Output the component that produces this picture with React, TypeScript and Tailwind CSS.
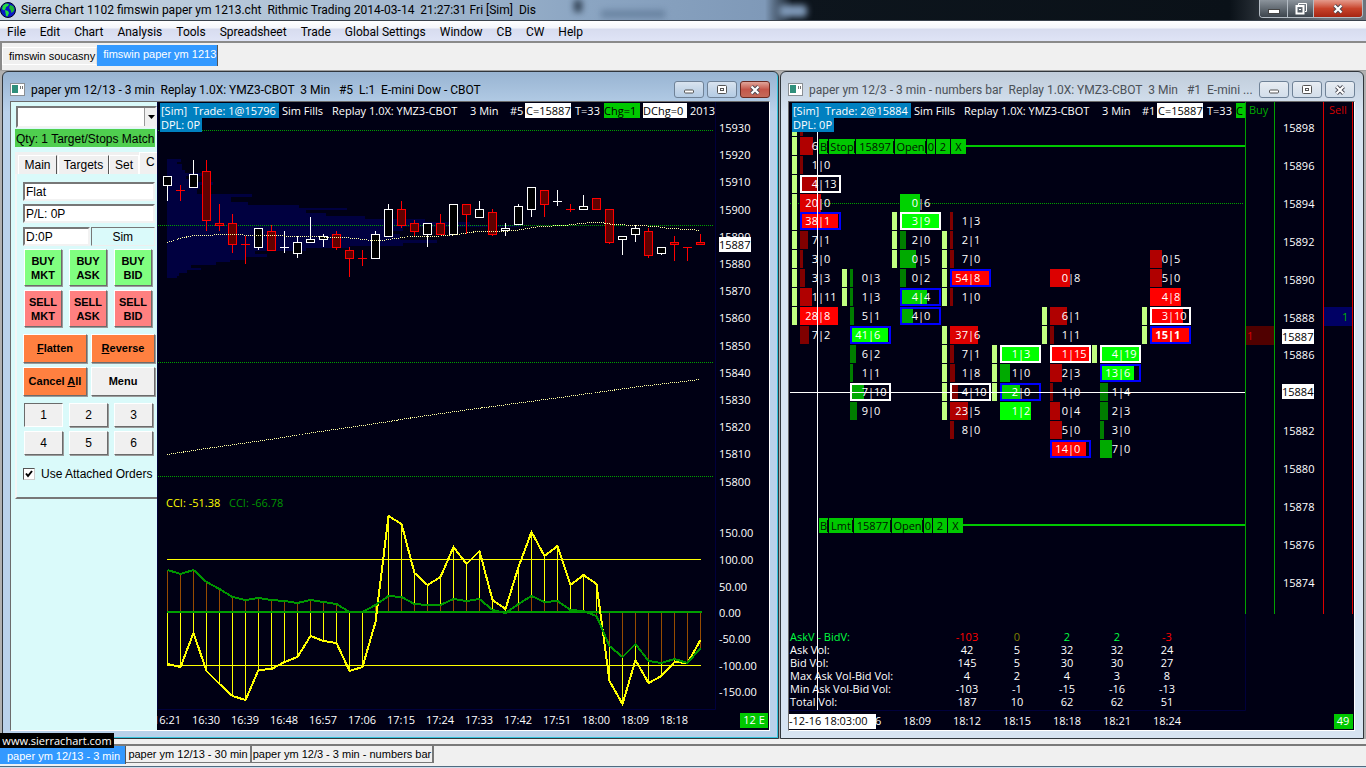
import React from "react";

const UI = "font-['Open_Sans',sans-serif] text-[11px] leading-[15px]";
const ARIAL = "font-['Liberation_Sans',Arial,sans-serif]";
const CAPTION = "font-[Roboto,sans-serif] text-[12px]";

/* ---------- data ---------- */

const menuItems = ["File", "Edit", "Chart", "Analysis", "Tools", "Spreadsheet", "Trade", "Global Settings", "Window", "CB", "CW", "Help"];

// [up, high, top, bottom, low], top === bottom means a doji cross
type Candle = [boolean, number, number, number, number];
const candles: Candle[] = [
  [true, 176, 176, 186, 201], [false, 185, 190, 190, 201], [true, 160, 174, 188, 188], [false, 160, 171, 221, 231],
  [false, 204, 223, 226, 231], [false, 214, 223, 245, 253], [false, 236, 244, 244, 264], [true, 228, 228, 248, 250],
  [false, 225, 231, 251, 251], [true, 231, 247, 247, 253], [true, 236, 242, 254, 258], [true, 217, 239, 243, 243],
  [true, 234, 236, 240, 247], [false, 231, 234, 248, 250], [false, 247, 250, 259, 277], [false, 250, 258, 258, 266],
  [true, 231, 234, 259, 259], [true, 204, 209, 237, 237], [false, 201, 209, 226, 228], [false, 220, 223, 232, 236],
  [true, 223, 223, 235, 247], [false, 214, 223, 235, 235], [true, 204, 204, 235, 235], [false, 204, 204, 215, 234],
  [true, 201, 209, 218, 218], [false, 209, 212, 235, 236], [true, 223, 228, 231, 236], [true, 204, 206, 225, 225],
  [true, 187, 187, 210, 217], [false, 190, 190, 205, 217], [true, 190, 201, 201, 206], [false, 204, 209, 209, 212],
  [true, 195, 206, 210, 210], [false, 198, 198, 210, 210], [false, 209, 209, 243, 244], [true, 236, 236, 240, 255],
  [true, 225, 228, 235, 242], [false, 228, 231, 256, 258], [true, 247, 247, 254, 255], [false, 236, 242, 245, 261],
  [false, 247, 247, 247, 261], [false, 234, 242, 245, 245],
];

const cciFast = [
  664, 667, 633, 671, 684, 696, 700, 670, 669, 662, 657, 636, 641, 643, 671, 667, 622, 516, 524, 573, 585, 577, 547, 564,
  551, 600, 609, 567, 532, 556, 546, 585, 575, 584, 681, 704, 660, 683, 676, 662, 663, 640,
];
const cciSlow = [
  570, 574, 570, 582, 589, 597, 600, 598, 600, 601, 603, 600, 602, 604, 612, 612, 605, 596, 597, 604, 605, 605, 599, 601,
  599, 610, 613, 604, 596, 602, 601, 610, 611, 616, 646, 657, 644, 661, 663, 659, 663, 648,
];

// volume profile rows: [y, height, right edge]
const profile = [
  [159, 3, 181], [162, 2, 177], [164, 6, 182], [170, 3, 185], [173, 3, 203], [176, 3, 186], [179, 3, 192], [182, 3, 213],
  [185, 4, 200], [189, 5, 197], [194, 3, 252], [197, 5, 231], [202, 3, 248], [205, 3, 299], [208, 2, 347], [210, 3, 306],
  [213, 3, 326], [216, 3, 365], [219, 3, 425], [222, 3, 470], [225, 2, 520], [227, 4, 403], [231, 3, 390], [234, 6, 400],
  [240, 3, 437], [243, 3, 403], [246, 2, 350], [248, 3, 306], [251, 3, 255], [254, 3, 267], [257, 3, 245], [260, 2, 230],
  [262, 3, 216], [265, 3, 191], [268, 2, 201], [270, 3, 187], [273, 3, 179], [276, 2, 177],
];

const barX = (i: number) => 167 + i * 13;
const toPath = (values: number[]) => values.map((v, i) => `${barX(i) + 0.5},${v}`).join(" ");

const timesLeft = ["16:21", "16:30", "16:39", "16:48", "16:57", "17:06", "17:15", "17:24", "17:33", "17:42", "17:51", "18:00", "18:09", "18:18"];
const pricesLeft = [15930, 15920, 15910, 15900, 15890, 15880, 15870, 15860, 15850, 15840, 15830, 15820, 15810, 15800];
const cciScale: [string, number][] = [["150.00", 533], ["100.00", 560], ["50.00", 587], ["0.00", 613], ["-50.00", 639], ["-100.00", 666], ["-150.00", 692]];
const pricesRight = [15898, 15896, 15894, 15892, 15890, 15888, 15886, 15882, 15880, 15878, 15876, 15874];

const R1 = "#800000", R2 = "#b00000", R3 = "#dc0000", R4 = "#ff0000";
const G1 = "#007d00", G2 = "#00aa00", G3 = "#00d200", G4 = "#00ff00";
const W = "#ffffff", B = "#0000ff";

// numbers bars: [price, bid, ask, bar width, bar colour, outline]
type Cell = [number, string, string, number, string, string?];
const bars: { x: number; range: number[]; cells: Cell[] }[] = [
  {
    x: 800, range: [15898, 15897, 15896, 15895, 15894, 15893, 15892, 15891, 15890, 15889, 15888],
    cells: [
      [15898, "", "", 3, R1], [15897, "6", "", 13, R2], [15896, "1", "0", 3, R1], [15895, "4", "13", 18, R2, W],
      [15894, "20", "0", 21, R3], [15893, "38", "1", 38, R4, B], [15892, "7", "1", 8, R1], [15891, "3", "0", 3, R1],
      [15890, "3", "3", 5, R1], [15889, "1", "11", 12, R2], [15888, "28", "8", 38, R4], [15887, "7", "2", 9, R1],
    ],
  },
  {
    x: 850, range: [15890, 15889],
    cells: [
      [15890, "0", "3", 3, G1], [15889, "1", "3", 3, G1], [15888, "5", "1", 4, G1], [15887, "41", "6", 38, G4, B],
      [15886, "6", "2", 6, G1], [15885, "1", "1", 3, G1], [15884, "7", "10", 14, G2, W], [15883, "9", "0", 7, G1],
    ],
  },
  {
    x: 900, range: [15893, 15892, 15891],
    cells: [
      [15894, "0", "6", 20, G3], [15893, "3", "9", 39, G4, W], [15892, "2", "0", 6, G1], [15891, "0", "5", 16, G2],
      [15890, "0", "2", 6, G1], [15889, "4", "4", 27, G3, B], [15888, "4", "0", 13, G2, B],
    ],
  },
  {
    x: 950, range: [15892, 15891, 15890, 15889, 15887, 15886, 15885, 15884, 15883],
    cells: [
      [15893, "1", "3", 3, R1], [15892, "2", "1", 3, R1], [15891, "7", "0", 4, R1], [15890, "54", "8", 39, R4, B],
      [15889, "1", "0", 3, R1], [15887, "37", "6", 28, R3], [15886, "7", "1", 4, R1], [15885, "1", "8", 5, R1],
      [15884, "4", "10", 8, R1, W], [15883, "23", "5", 18, R2], [15882, "8", "0", 4, R1],
    ],
  },
  {
    x: 1000, range: [15886, 15885, 15884],
    cells: [[15886, "1", "3", 39, G4, W], [15885, "1", "0", 10, G2], [15884, "2", "0", 20, G3, B], [15883, "1", "2", 31, G4]],
  },
  {
    x: 1050, range: [15888, 15887],
    cells: [
      [15890, "0", "8", 20, R3], [15888, "6", "1", 17, R2], [15887, "1", "1", 4, R1], [15886, "1", "15", 39, R4, W],
      [15885, "2", "3", 12, R2], [15884, "1", "0", 3, R1], [15883, "0", "4", 10, R2], [15882, "5", "0", 12, R2],
      [15881, "14", "0", 36, R4, B],
    ],
  },
  {
    x: 1100, range: [15886],
    cells: [
      [15886, "4", "19", 39, G4, W], [15885, "13", "6", 34, G4, B], [15884, "1", "4", 8, G1], [15883, "2", "3", 8, G1],
      [15882, "3", "0", 4, G1], [15881, "7", "0", 12, G2],
    ],
  },
  {
    x: 1150, range: [15888, 15887],
    cells: [
      [15891, "0", "5", 12, R2], [15890, "5", "0", 12, R2], [15889, "4", "8", 31, R4], [15888, "3", "10", 33, R4, W],
      [15887, "15", "1", 39, R4, B],
    ],
  },
];
const rowY = (price: number) => Math.round(326 + (15887 - price) * 18.92);

// working orders: boxes as [label, x, width]
type Order = { y: number; end: number; parts: [string, number, number][] };
const orders: Order[] = [
  { y: 139, end: 966, parts: [["B", 819, 9], ["Stop", 829, 26], ["15897", 856, 38], ["Open", 895, 31], ["0", 927, 8], ["2", 936, 14], ["X", 951, 15]] },
  { y: 518, end: 963, parts: [["B", 819, 9], ["Lmt", 829, 24], ["15877", 854, 37], ["Open", 892, 31], ["0", 924, 8], ["2", 933, 14], ["X", 948, 15]] },
];

const stats: [string, string[]][] = [
  ["AskV - BidV:", ["-103", "0", "2", "2", "-3"]],
  ["Ask Vol:", ["42", "5", "32", "32", "24"]],
  ["Bid Vol:", ["145", "5", "30", "30", "27"]],
  ["Max Ask Vol-Bid Vol:", ["4", "2", "4", "3", "8"]],
  ["Min Ask Vol-Bid Vol:", ["-103", "-1", "-15", "-16", "-13"]],
  ["Total Vol:", ["187", "10", "62", "62", "51"]],
];
const deltaColors = ["text-[#ff0000]", "text-[#808000]", "text-[#00ff40]", "text-[#00ff40]", "text-[#ff0000]"];

/* ---------- title bar and menus ---------- */

const Globe = () => (
  <svg className="h-4 w-4 shrink-0" viewBox="0 0 16 16">
    <circle cx="8" cy="8" r="7.5" fill="#0a1ac8" stroke="#000020" />
    <path d="M3 3.5 6 1.5l3 .5-1 2-2 1-.5 2L4 8.5 2 7z" fill="#22e03c" />
    <path d="m5 8 3 1 1 2-1.500 3.500L6 14l-.5-3z" fill="#22e03c" />
    <path d="m10 3 3 1 1.500 3-1 2.500-2 1.500-1-3-1.500-2z" fill="#1cb834" />
  </svg>
);

const CloseGlyph = () => (
  <svg className="h-4 w-4" viewBox="0 0 16 16">
    <path d="m4.500 4.500 7 7M11.500 4.500l-7 7" stroke="#4a4a55" strokeWidth="4" />
    <path d="m4.500 4.500 7 7M11.500 4.500l-7 7" stroke="#fff" strokeWidth="2.200" />
  </svg>
);

const TitleBar = () => (
  <header className="relative flex h-[21px] items-center justify-between overflow-hidden border-b border-[#39424c] bg-[linear-gradient(90deg,#c9d6e4_0%,#b9cadb_15%,#a3b8cf_30%,#8ba5c2_43%,#7f99b8_56%,#0d151d_58%,#0a1118_90%,#6c747c_97%)] pr-[3px]">
    {/* tabs of the browser behind the glass */}
    <div className="absolute left-[42%] top-0 h-3 w-2 bg-[#1c2a3a] opacity-80 blur-[3px]" />
    <div className="absolute left-[44%] top-[10px] h-2 w-16 bg-[#56708e] opacity-60 blur-[3px]" />
    <div className="absolute left-[57%] top-[5px] h-3 w-7 rounded bg-[#7f99b8] blur-[3px]" />
    <div className="relative flex items-center gap-[5px]">
      <Globe />
      <h1 className={`${CAPTION} whitespace-pre leading-[22px] text-black`}>
        Sierra Chart 1102 fimswin paper ym 1213.cht  Rithmic Trading 2014-03-14  21:27:31 Fri [Sim]  Dis
      </h1>
    </div>
    <div className="relative flex h-[18px] self-start overflow-hidden rounded-b border border-t-0 border-[#b4bcc4]">
      <button aria-label="Minimize" className="flex w-7 items-center justify-center border-r border-[#b4bcc4] bg-gradient-to-b from-[#8c949c] to-[#3d454d]">
        <svg className="h-4 w-4" viewBox="0 0 16 16"><rect x="2.500" y="8.500" width="11" height="4" fill="#fff" stroke="#444" /></svg>
      </button>
      <button aria-label="Restore" className="flex w-[26px] items-center justify-center border-r border-[#b4bcc4] bg-gradient-to-b from-[#8c949c] to-[#3d454d]">
        <svg className="h-4 w-4" viewBox="0 0 16 16" fill="none" stroke="#fff">
          <path d="M5.500 4V2.500h8v8H12" />
          <rect x="3.500" y="5" width="7" height="7.500" strokeWidth="2" />
          <path d="M6 8.500h2" />
        </svg>
      </button>
      <button aria-label="Close" className="flex w-[48px] items-center justify-center bg-gradient-to-b from-[#e49a8c] via-[#c8432b] to-[#a52512]">
        <CloseGlyph />
      </button>
    </div>
  </header>
);

const MenuBar = () => (
  <nav className="h-[22px] border-b-2 border-[#8a8a8a] bg-[linear-gradient(#fff_0%,#f4f6fb_35%,#d7dcef_40%,#dfe4f6_100%)]">
    <ul className={`${CAPTION} flex gap-[14px] pl-[7px] leading-[22px] text-black`}>
      {menuItems.map((item) => (
        <li key={item}>
          <button>{item}</button>
        </li>
      ))}
    </ul>
  </nav>
);

const ChartbookTabs = () => (
  <div className={`${ARIAL} flex h-[27px] items-start border-l-2 border-[#8a8a8a] bg-[#f0f0f0] pt-px text-[11px] text-black`}>
    <button className="mt-[3px] h-[18px] border border-white border-r-[#ddd] pl-[6px] pr-px">fimswin soucasny</button>
    <button className="mt-px h-[21px] border-r border-[#555] bg-[#3399ff] pb-[3px] pl-[6px] pr-px text-white">fimswin paper ym 1213</button>
  </div>
);

/* ---------- MDI window ---------- */

const mdiBtn = "flex h-[17px] w-[30px] items-center justify-center rounded-[3px] border";
const plainBtn = "border-[#6f8297] bg-gradient-to-b from-white/60 to-white/10";

const MdiWindow = ({ title, active, children }: { title: string; active?: boolean; children: React.ReactNode }) => (
  <section
    className={`flex min-w-0 flex-col rounded-t-md border border-[#30363c] pb-[7px] pl-[7px] pr-2 ${
      active
        ? "bg-[linear-gradient(#98b4d2_0px,#b9d1ea_40px)] shadow-[inset_-1px_-1px_0_#35c4dc]"
        : "bg-[linear-gradient(#c0ccda_0px,#d7e4f2_40px)]"
    }`}
  >
    <div className="flex h-[29px] items-center gap-[6px] pt-[6px]">
      <svg className="h-[13px] w-[15px] shrink-0" viewBox="0 0 15 13">
        <rect x=".5" y=".5" width="14" height="12" fill="#fff" stroke="#8a8f94" />
        <rect x="2" y="2" width="6" height="8" fill="#2f8f7c" />
        <rect x="10" y="3" width="1" height="3" fill="#777" />
        <rect x="12" y="3" width="1" height="3" fill="#777" />
      </svg>
      <h2 className={`${CAPTION} min-w-0 flex-1 overflow-hidden whitespace-pre ${active ? "text-black" : "text-[#4b5158]"}`}>{title}</h2>
      <div className="flex gap-[3px]">
        <button aria-label="Minimize" className={`${mdiBtn} ${plainBtn}`}>
          <svg className="h-4 w-4" viewBox="0 0 16 16"><rect x="3.500" y="8" width="9" height="3" rx="1" fill="#fff" stroke="#555" /></svg>
        </button>
        <button aria-label="Maximize" className={`${mdiBtn} ${plainBtn}`}>
          <svg className="h-4 w-4" viewBox="0 0 16 16" stroke="#555" fill="#fff">
            <rect x="3.500" y="3.500" width="9" height="8" rx="1" />
            <rect x="6.500" y="6.500" width="3" height="2" />
          </svg>
        </button>
        <button
          aria-label="Close"
          className={`${mdiBtn} ${active ? "border-[#6b2a22] bg-gradient-to-b from-[#e0a59b] via-[#c4564a] to-[#c46a5a]" : plainBtn}`}
        >
          <CloseGlyph />
        </button>
      </div>
    </div>
    <div className="flex flex-1 border border-white border-l-[#6b6b6b] border-t-[#6b6b6b] bg-[#000014]">{children}</div>
  </section>
);

/* Header line drawn over a chart */
const ChartHeader = ({ trade, num, children }: { trade: string; num: string; children?: React.ReactNode }) => (
  <div className={`${UI} absolute left-[3px] right-0 top-px overflow-hidden whitespace-pre text-white`}>
    <div className="flex h-[15px]">
      <span className="w-[119px] shrink-0 bg-[#0080c0] pl-px">{`[Sim]  Trade: ${trade}`}</span>
      <span className="ml-[3px] w-[50px] shrink-0">Sim Fills</span>
      <span className="w-[138px] shrink-0">Replay 1.0X: YMZ3-CBOT</span>
      <span className="w-[40px] shrink-0">3 Min</span>
      <span className="w-[15px] shrink-0">{num}</span>
      <span className="w-[46px] shrink-0 overflow-hidden bg-white pl-px text-black">C=15887</span>
      <span className="ml-1 w-[29px] shrink-0">T=33</span>
      {children}
    </div>
    <div className="h-[14px] w-[42px] bg-[#0080c0] pl-px leading-[14px]">DPL: 0P</div>
  </div>
);

/* ---------- trade panel ---------- */

const raised = "border border-white border-b-[#6b6b6b] border-r-[#6b6b6b] shadow-[1px_1px_0_#9a9a9a]";
const sunken = "border-2 border-b-[#f2f2f2] border-l-[#777] border-r-[#f2f2f2] border-t-[#777] bg-white";
const field = `${sunken} h-[19px] w-full min-w-0 px-px text-[12px] leading-[15px] text-black outline-none`;

const TradePanel = () => (
  <aside className={`${ARIAL} w-[146px] shrink-0 overflow-hidden bg-[#dafafa] text-[12px] text-black`}>
    <div className="relative ml-[5px] mt-1">
      <select aria-label="Symbol" className={`${sunken} block h-[22px] w-full appearance-none`}>
        <option></option>
      </select>
      <span className="pointer-events-none absolute bottom-[2px] right-0 top-[2px] flex w-[13px] items-center justify-center border-l border-[#999] bg-[#f0f0f0]">
        <svg className="h-[5px] w-[7px]" viewBox="0 0 7 5"><path d="M0 0h7L3.500 4z" /></svg>
      </span>
    </div>
    <p className="ml-1 mr-[2px] mt-px h-[18px] overflow-hidden whitespace-nowrap bg-[#4fce4f] pl-px leading-[20px]">Qty: 1 Target/Stops Match</p>

    <div className="ml-1 mt-[5px] flex h-[22px] items-end bg-[#f0f0f0] pl-[3px]">
      <button className="h-[19px] w-[39px] border border-white border-b-0 border-r-[#555]">Main</button>
      <button className="ml-px h-[19px] w-[51px] border border-white border-b-0 border-r-[#555]">Targets</button>
      <button className="h-[19px] w-[30px] border border-white border-b-0">Set</button>
      <button className="h-[22px] flex-1 overflow-hidden border-l border-t border-white pb-[3px] text-left pl-[6px]">C</button>
    </div>

    <div className="ml-1 border-b-2 border-l-2 border-b-[#777] border-l-[#f4f4f4] pb-[15px] pl-[6px] pt-2">
      <div className="mr-[2px] flex flex-col gap-[3px]">
        <input aria-label="Position" readOnly defaultValue="Flat" className={field} />
        <input aria-label="Profit and loss" readOnly defaultValue="P/L: 0P" className={field} />
        <div className="mt-px flex gap-px">
          <input aria-label="Daily" readOnly defaultValue="D:0P" className={field} />
          <span className="h-[19px] w-full border border-[#eee] border-l-[#777] border-t-[#777] text-center leading-[18px]">Sim</span>
        </div>
      </div>

      <div className="mt-[3px] grid grid-cols-[38px_38px_38px] gap-x-[7px] gap-y-[4px] pl-px text-[11px] font-bold leading-[14px]">
        {["MKT", "ASK", "BID"].map((t) => (
          <button key={t} className={`${raised} h-[37px] bg-[#80ff80]`}>BUY<br />{t}</button>
        ))}
        {["MKT", "ASK", "BID"].map((t) => (
          <button key={t} className={`${raised} h-[37px] bg-[#ff8080]`}>SELL<br />{t}</button>
        ))}
      </div>

      <div className="mt-[7px] grid grid-cols-[64px_64px] gap-1 text-[11px] font-bold">
        <button className={`${raised} h-[29px] bg-[#ff8040]`}><u>F</u>latten</button>
        <button className={`${raised} h-[29px] bg-[#ff8040]`}><u>R</u>everse</button>
        <button className={`${raised} h-[29px] whitespace-nowrap bg-[#ff8040]`}>Cancel <u>A</u>ll</button>
        <button className={`${raised} h-[29px] bg-[#f0f0f0]`}>Menu</button>
      </div>

      <div className="mt-[7px] grid grid-cols-[39px_39px_39px] gap-x-[6px] gap-y-1 pl-px">
        <button className="h-6 border border-white border-l-[#6b6b6b] border-t-[#6b6b6b] bg-[#f0f0f0]">1</button>
        {[2, 3, 4, 5, 6].map((n) => (
          <button key={n} className={`${raised} h-6 bg-[#f0f0f0]`}>{n}</button>
        ))}
      </div>

      <label className="mt-[11px] flex items-center gap-[6px] whitespace-nowrap leading-[16px]">
        <span className="relative flex h-3 w-3 shrink-0">
          <input type="checkbox" defaultChecked className="h-3 w-3 appearance-none border border-[#ccc] border-l-[#555] border-t-[#555] bg-white" />
          <svg className="pointer-events-none absolute inset-0 h-3 w-3" viewBox="0 0 12 12"><path d="m3 5.500 2 2.500 4-5" fill="none" stroke="#000" strokeWidth="2" /></svg>
        </span>
        Use Attached Orders
      </label>
    </div>
  </aside>
);

/* ---------- 3 min candle chart ---------- */

const CandleChart = () => (
  <svg className="block h-auto w-full font-['Open_Sans',sans-serif] text-[11px]" viewBox="157 102 612 628" fill="#fff">
    <rect x="157" y="102" width="612" height="628" fill="#000014" />
    <g fill="#000040">
      {profile.map(([y, h, right]) => (
        <rect key={y} x="167" y={y} width={right - 167} height={h} />
      ))}
    </g>
    <path d="M157.500 102V710M157 709.500H715.500V102" stroke="#00003c" fill="none" />
    <path d="M158 130.500H713M158 225.500H713M158 362.500H713M158 476.500H713" stroke="#00a000" strokeDasharray="1 1" />

    {candles.map(([up, high, top, bottom, low], i) => {
      const color = up ? "#fff" : "#f00";
      const x = barX(i);
      return (
        <g key={i} stroke={color} fill={up ? "#000" : "#600000"} shapeRendering="crispEdges">
          <path d={`M${x + 0.5} ${high}V${low}`} />
          {top === bottom ? (
            <path d={`M${x - 4} ${top + 0.5}h9`} />
          ) : (
            <rect x={x - 3.5} y={top + 0.5} width="8" height={bottom - top - 1} />
          )}
        </g>
      );
    })}

    <g fill="none" stroke="#ffffa0" strokeDasharray="1 1" shapeRendering="crispEdges">
      <path d="M167 242.500 180 238.500 193 235.500 207 235.500 220 234.500 265 235.500 342 237.500 356 238.500 370 240.500 382 240.500 395 238.500 410 236.500 430 236.500 450 235.500 463 233.500 477 231.500 502 231.500 515 230.500 528 228.500 540 226.500 565 225.500 590 222.500 602 222.500 612 224.500 640 225.500 655 226.500 670 228.500 690 229.500 700 230.500" />
      <path d="M167 454.500 220 446.500 270 439.500 320 431.500 370 424.500 420 416.500 470 409.500 560 397.500 640 386.500 700 379.500" />
    </g>

    {/* CCI */}
    <path d="M167 559.500H701M167 665.500H701" stroke="#ffff00" />
    {cciFast.map((y, i) => (
      <path key={i} d={`M${barX(i) + 0.5} 612V${y}`} stroke="#ffff00" />
    ))}
    {cciSlow.map((y, i) => (
      <path key={i} d={`M${barX(i) + 0.5} 612V${y}`} stroke="#964b00" />
    ))}
    <path d="M167 612H702" stroke="#00a000" strokeWidth="2" />
    <g fill="none" strokeWidth="2" shapeRendering="crispEdges">
      <polyline points={toPath(cciFast)} stroke="#ffff00" />
      <polyline points={toPath(cciSlow)} stroke="#009600" />
    </g>
    <text x="166" y="507" fill="#ffff00">CCI: -51.38</text>
    <text x="229" y="507" fill="#009600">CCI: -66.78</text>

    {/* scales */}
    {pricesLeft.map((p, i) => (
      <text key={p} x="719" y={Math.round(132 + i * 27.2)}>{p}</text>
    ))}
    <rect x="719" y="237" width="32" height="15" />
    <text x="719" y="249" fill="#000">15887</text>
    {cciScale.map(([label, y]) => (
      <text key={label} x="719" y={y + 4}>{label}</text>
    ))}
    {timesLeft.map((t, i) => (
      <text key={t} x={167 + i * 39} y="724" textAnchor="middle">{t}</text>
    ))}
    <rect x="740" y="713" width="28" height="15" fill="#00c800" />
    <text x="754" y="724" textAnchor="middle">12 E</text>
  </svg>
);

/* ---------- numbers bars chart ---------- */

const NumbersChart = () => (
  <svg className="block h-auto w-full whitespace-pre font-['Open_Sans',sans-serif] text-[11px]" viewBox="789 102 565 628" fill="#fff">
    <rect x="789" y="102" width="565" height="628" fill="#000014" />
    <path d="M789 710.500H1245.500V614" stroke="#00003c" fill="none" />
    <path d="M790 203.500H1243" stroke="#00a000" strokeDasharray="1 1" />

    {bars.map((bar) => (
      <g key={bar.x}>
        {bar.range.map((p) => (
          <rect key={p} x={bar.x - 8} y={rowY(p)} width="5" height="18" fill="#c0ff80" />
        ))}
        {bar.cells.map(([price, bid, ask, width, color, outline]) => {
          const y = rowY(price);
          return (
            <g key={price} fontWeight={bar.x === 1150 && price === 15887 ? 700 : 400}>
              <rect x={bar.x} y={y} width={width} height="18" fill={color} />
              {outline && <rect x={bar.x + 1} y={y + 1} width="39" height="16" fill="none" stroke={outline} strokeWidth="2" />}
              {ask ? (
                <>
                  <text x={bar.x + 24} y={y + 13} textAnchor="end">{bid}|</text>
                  <text x={bar.x + 24} y={y + 13}>{ask}</text>
                </>
              ) : (
                <text x={bar.x + 18} y={y + 13} textAnchor="end">{bid}</text>
              )}
            </g>
          );
        })}
      </g>
    ))}

    {/* crosshair */}
    <path d="M790 392.500H1245M817.500 132V710" stroke="#fff" />

    {/* working orders */}
    {orders.map((o) => (
      <g key={o.y}>
        <path d={`M${o.end} ${o.y + 7}H1245`} stroke="#00c800" strokeWidth="2" />
        {o.parts.map(([label, x, w], i) => (
          <g key={label}>
            <rect x={x} y={o.y} width={w} height="15" fill="#00c800" />
            {i < 4 && <path d={`M${x + w - 0.5} ${o.y + 2}v12`} stroke="#001400" />}
            <text x={x + w / 2} y={o.y + 12} fill="#001400" textAnchor="middle">{label}</text>
          </g>
        ))}
      </g>
    ))}

    {/* buy / sell columns */}
    <rect x="1246" y="326" width="28" height="19" fill="#500000" />
    <rect x="1324" y="307" width="28" height="19" fill="#000064" />
    <path d="M1245.500 102V614M1274.500 102V614" stroke="#00a000" />
    <path d="M1323.500 102V614M1352.500 102V614" stroke="#dc0000" />
    <text x="1249" y="114" fill="#00a800">Buy</text>
    <text x="1329" y="114" fill="#d00000">Sell</text>
    <text x="1247" y="340" fill="#dc0000">1</text>
    <text x="1342" y="321" fill="#00b400">1</text>
    {pricesRight.map((p) => (
      <text key={p} x="1283" y={Math.round(132 + (15898 - p) * 18.95)}>{p}</text>
    ))}
    <rect x="1282" y="329" width="32" height="15" />
    <text x="1282" y="341" fill="#000">15887</text>
    <rect x="1282" y="384" width="32" height="15" />
    <text x="1282" y="396" fill="#000">15884</text>

    {/* time scale */}
    <text x="875" y="725">6</text>
    {["18:09", "18:12", "18:15", "18:18", "18:21", "18:24"].map((t, i) => (
      <text key={t} x={917 + i * 50} y="725" textAnchor="middle">{t}</text>
    ))}
    <rect x="789" y="714" width="87" height="15" />
    <text x="789" y="725" fill="#000">-12-16  18:03:00</text>
    <rect x="1334" y="714" width="19" height="15" fill="#00c800" />
    <text x="1343" y="725" textAnchor="middle">49</text>
  </svg>
);

const VolumeTable = () => (
  <table className="absolute left-px top-[528px] table-fixed border-collapse font-['Open_Sans',sans-serif] text-[11px] leading-[13px] text-white">
    <tbody>
      {stats.map(([label, values], row) => (
        <tr key={label} className="h-[13px]">
          <th scope="row" className={`w-[152px] p-0 text-left font-normal ${row === 0 ? "text-[#00ff40]" : ""}`}>{label}</th>
          {values.map((v, i) => (
            <td key={i} className={`w-[50px] p-0 text-center ${row === 0 ? deltaColors[i] : ""}`}>{v}</td>
          ))}
        </tr>
      ))}
    </tbody>
  </table>
);

/* ---------- app ---------- */

const BottomTabs = () => (
  <footer className={`${ARIAL} relative mt-[5px] border-t-2 border-[#7a7a7a] bg-[#f0f0f0] text-[11px] text-black`}>
    <div className="flex h-[20px] items-start">
      <button className="h-[18px] w-[126px] whitespace-nowrap border-r border-[#555] bg-[#3399ff] pl-[2px] pt-[2px] text-white">paper ym 12/13 - 3 min</button>
      <button className="h-[17px] w-[126px] whitespace-nowrap border-b border-r-2 border-[#777]">paper ym 12/13 - 30 min</button>
      <button className="h-[17px] w-[182px] whitespace-nowrap border-b border-r-2 border-[#777]">paper ym 12/3 - 3 min - numbers bar</button>
    </div>
    <div className="h-[2px] border-t border-[#4f6a80] bg-[#cfdcea]" />
    <a href="#" className="absolute -top-[13px] left-0 h-[15px] w-[114px] bg-black text-center font-['Open_Sans',sans-serif] leading-[15px] text-white">
      www.sierrachart.com
    </a>
  </footer>
);

const App = () => {
  return (
    <div className="min-h-screen bg-[#f0f0f0]">
      <TitleBar />
      <MenuBar />
      <ChartbookTabs />
      <main className="grid grid-cols-[minmax(0,777fr)_minmax(0,584fr)] gap-px border-t border-[#a0a0a0] bg-[#b0b0b0] px-[2px]">
        <MdiWindow active title="paper ym 12/13 - 3 min  Replay 1.0X: YMZ3-CBOT  3 Min   #5  L:1  E-mini Dow - CBOT">
          <TradePanel />
          <div className="relative min-w-0 flex-1">
            <CandleChart />
            <ChartHeader trade="1@15796" num="#5">
              <span className="w-[36px] shrink-0 overflow-hidden bg-[#00c800] text-black">Chg=1</span>
              <span className="ml-[3px] w-[44px] shrink-0 overflow-hidden bg-white text-black">DChg=0</span>
              <span className="ml-[3px]">2013</span>
            </ChartHeader>
          </div>
        </MdiWindow>
        <MdiWindow title="paper ym 12/3 - 3 min - numbers bar  Replay 1.0X: YMZ3-CBOT  3 Min   #1  E-mini ...">
          <div className="relative min-w-0 flex-1">
            <NumbersChart />
            <VolumeTable />
            <ChartHeader trade="2@15884" num="#1">
              <span className="w-[9px] shrink-0 overflow-hidden bg-[#00c800] text-black">C</span>
            </ChartHeader>
          </div>
        </MdiWindow>
      </main>
      <BottomTabs />
    </div>
  );
};

export default App;
